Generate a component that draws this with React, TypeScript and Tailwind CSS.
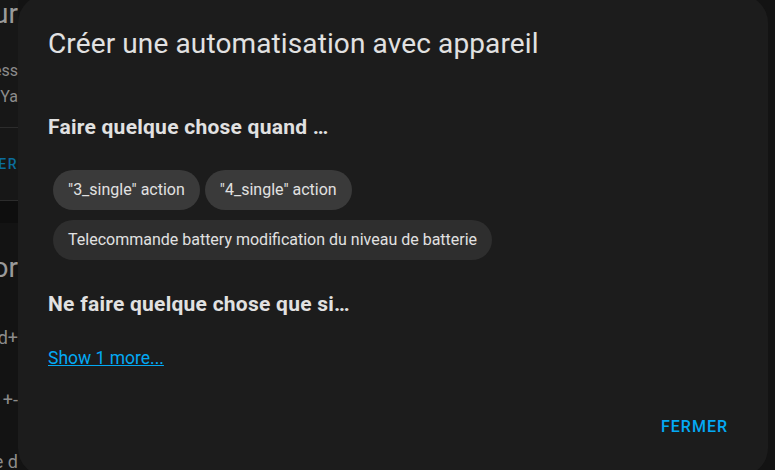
import { ReactNode } from "react";

const chips = [
  ["\"3_single\" action", "\"4_single\" action"],
  ["Telecommande battery modification du niveau de batterie"],
];

function Chip({ children, light }: { children: ReactNode; light?: boolean }) {
  return (
    <button
      className={`h-10 px-[15px] rounded-full text-[16px] text-[#e1e1e1] ${
        light ? "bg-[#3a3a3a]" : "bg-[#2e2e2e]"
      }`}
    >
      {children}
    </button>
  );
}

export default function App() {
  return (
    <div
      className="relative w-[775px] h-[470px] overflow-hidden bg-[#131313]"
      style={{ fontFamily: "Roboto, 'Noto Sans', sans-serif" }}
    >
      {/* Page behind the dialog */}
      <div className="w-[300px] -ml-[282px] flex flex-col text-[#8c8c8c]">
        <div className="bg-[#171717] flex flex-col">
          <div className="text-[28px] leading-[28px] text-right text-[#9a9a9a]">Interrupteur</div>
          <div className="pt-[30px] text-[16px] leading-[26px] text-right">
            <div>Zigbee2Mqtt Wireless</div>
            <div>Telecommande Ya</div>
          </div>
          <div className="mt-[17px] h-px bg-[#2c2c2c]" />
          <div className="h-[72px] flex items-center justify-end text-[14px] font-medium tracking-[1.5px] text-[#0b6d9c]">
            RENOMMER
          </div>
        </div>
        <div className="h-px bg-[#2c2c2c]" />
        <div className="h-[22px] bg-[#0e0e0e]" />
        <div className="pt-[29px] text-[28px] leading-[32px] text-right text-[#9a9a9a]">Automatisation por</div>
        <div className="pt-[42px] text-[18px] leading-[24px] text-right">Commande d+</div>
        <div className="pt-[38px] text-[18px] leading-[24px] text-right">Commande +-</div>
        <div className="pt-[38px] text-[18px] leading-[24px] text-right">Commande d</div>
      </div>

      {/* Dialog */}
      <div className="absolute left-[18px] top-[-5px] w-[750px] h-[481px] rounded-[28px] bg-[#1c1c1c] flex flex-col">
        <h2 className="pl-[30px] pt-[31px] text-[28px] leading-[36px] tracking-[0.12px] text-[#e1e1e1]">
          Créer une automatisation avec appareil
        </h2>
        <div className="px-[30px] pt-[51px] flex flex-col">
          <h3 className="text-[21px] leading-[28px] font-bold tracking-[0.25px] text-[#e1e1e1]">
            Faire quelque chose quand …
          </h3>
          <div className="pt-[29px] pl-[5px] flex flex-col gap-[10px]">
            {chips.map((row, i) => (
              <div key={i} className="flex gap-[5px]">
                {row.map((c) => (
                  <Chip key={c} light={i === 0}>
                    {c}
                  </Chip>
                ))}
              </div>
            ))}
          </div>
          <h3 className="pt-[30px] text-[21px] leading-[28px] font-bold tracking-[0.25px] text-[#e1e1e1]">
            Ne faire quelque chose que si…
          </h3>
          <a className="mt-[28px] text-[17.5px] leading-[24px] text-[#03a9f4] underline self-start cursor-pointer">
            Show 1 more...
          </a>
        </div>
        <div className="mt-auto pb-[39px] pr-[40px] flex justify-end">
          <button className="text-[16px] leading-[20px] font-medium tracking-[1px] text-[#03a9f4]">FERMER</button>
        </div>
      </div>
    </div>
  );
}
